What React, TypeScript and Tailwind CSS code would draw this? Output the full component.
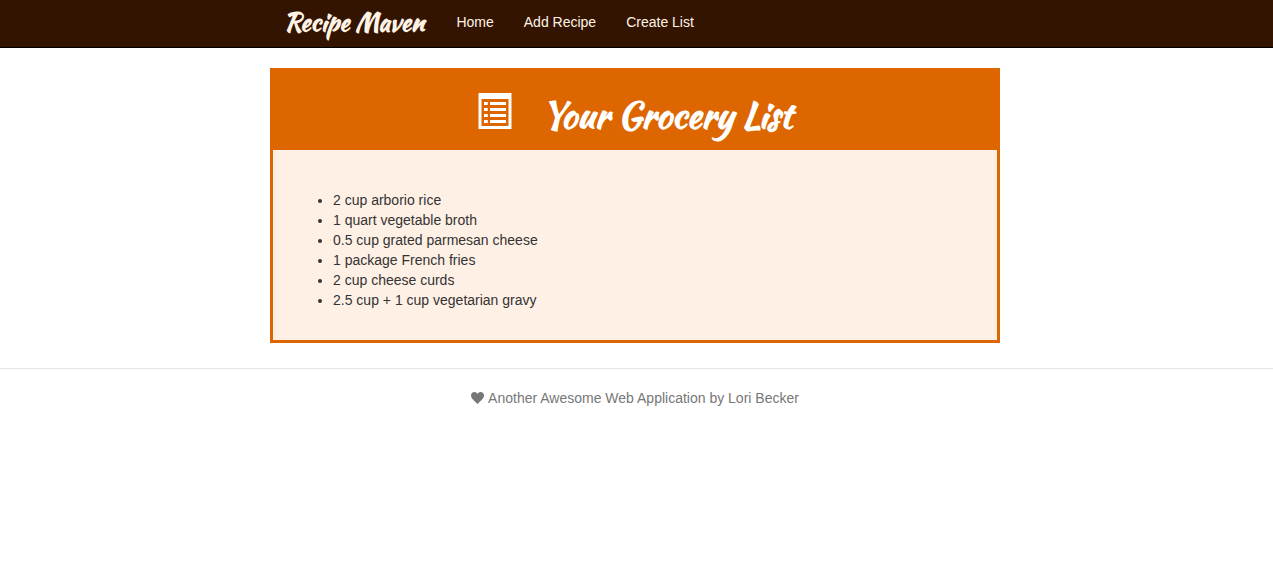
const navLinks = ['Home', 'Add Recipe', 'Create List'];

const groceries = [
  '2 cup arborio rice',
  '1 quart vegetable broth',
  '0.5 cup grated parmesan cheese',
  '1 package French fries',
  '2 cup cheese curds',
  '2.5 cup + 1 cup vegetarian gravy',
];

function ListIcon() {
  return (
    <svg width="34" height="36" viewBox="0 0 34 36" fill="currentColor" aria-hidden="true">
      <path fillRule="evenodd" d="M.5 0h33v36H.5zM3.5 6v27h27V6z" />
      {[9, 15, 21, 27].map((y) => (
        <g key={y}>
          <rect x="6" y={y} width="3.8" height="3" />
          <rect x="12" y={y} width="16" height="3" />
        </g>
      ))}
    </svg>
  );
}

function HeartIcon() {
  return (
    <svg width="13" height="12" viewBox="0 0 13 12" fill="currentColor" aria-hidden="true">
      <path d="M6.5 2.1C7.1.8 8.2 0 9.6 0 11.5 0 13 1.5 13 3.5 13 6.300 10 8.300 6.500 12 3 8.300 0 6.300 0 3.500 0 1.500 1.500 0 3.400 0 4.800 0 5.900.8 6.500 2.100z" />
    </svg>
  );
}

export default function App() {
  return (
    <div className="bg-white font-['Helvetica_Neue','Liberation_Sans',sans-serif] text-sm leading-5 text-[#333]">
      <header className="border-b border-black bg-[#331400] pr-[3px] text-[#fff3e6]">
        <nav className="mx-auto flex h-[47px] max-w-[730px] items-center px-3.5 pb-[3px]">
          <a
            href="#"
            className="mr-8 whitespace-nowrap font-['Kaushan_Script','Lato',cursive] text-[25px] font-bold"
          >
            Recipe Maven
          </a>
          <ul className="flex gap-[30px]">
            {navLinks.map((label) => (
              <li key={label}>
                <a href="#" className="whitespace-nowrap">
                  {label}
                </a>
              </li>
            ))}
          </ul>
        </nav>
      </header>

      <main className="pt-5 pr-[3px] pb-[25px]">
        <section className="mx-auto max-w-[730px] border-[3px] border-[#dd6600] bg-[#fff0e6]">
          <div className="flex h-[79px] items-center justify-center gap-[30px] bg-[#dd6600] text-white">
            <ListIcon />
            <h1 className="pt-2 font-['Kaushan_Script','Lato',cursive] text-4xl leading-10 font-bold">
              Your Grocery List
            </h1>
          </div>
          <ul className="list-disc pt-10 pr-5 pb-[30px] pl-[60px]">
            {groceries.map((item) => (
              <li key={item}>{item}</li>
            ))}
          </ul>
        </section>
      </main>

      <footer className="border-t border-[#e5e5e5] pt-[19px] pr-[3px] text-[#777]">
        <p className="flex items-center justify-center gap-1">
          <HeartIcon />
          Another Awesome Web Application by Lori Becker
        </p>
      </footer>
    </div>
  );
}
